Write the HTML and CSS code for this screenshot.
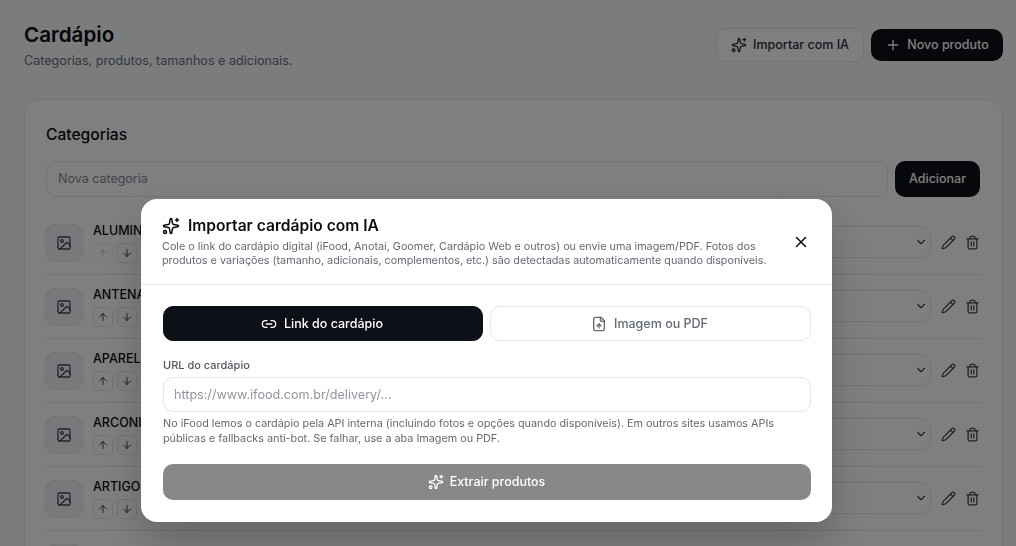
FILE: index.html
```html
<!DOCTYPE html>
<html lang="pt-BR">
<head>
<meta charset="utf-8">
<title>Cardápio</title>
<link rel="stylesheet" href="styles.css">
</head>
<body>
<svg class="defs" width="0" height="0" aria-hidden="true">
  <symbol id="i-sparkles" viewBox="0 0 24 24"><path d="M11.017 2.814a1 1 0 0 1 1.966 0l1.051 5.558a2 2 0 0 0 1.594 1.594l5.558 1.051a1 1 0 0 1 0 1.966l-5.558 1.051a2 2 0 0 0-1.594 1.594l-1.051 5.558a1 1 0 0 1-1.966 0l-1.051-5.558a2 2 0 0 0-1.594-1.594l-5.558-1.051a1 1 0 0 1 0-1.966l5.558-1.051a2 2 0 0 0 1.594-1.594z"/><path d="M20 2v4"/><path d="M22 4h-4"/><circle cx="4" cy="20" r="2"/></symbol>
  <symbol id="i-plus" viewBox="0 0 24 24"><path d="M5 12h14"/><path d="M12 5v14"/></symbol>
  <symbol id="i-image" viewBox="0 0 24 24"><rect x="3" y="3" width="18" height="18" rx="2"/><circle cx="9" cy="9" r="2"/><path d="m21 15-3.086-3.086a2 2 0 0 0-2.828 0L6 21"/></symbol>
  <symbol id="i-up" viewBox="0 0 24 24"><path d="m5 12 7-7 7 7"/><path d="M12 19V5"/></symbol>
  <symbol id="i-down" viewBox="0 0 24 24"><path d="M12 5v14"/><path d="m19 12-7 7-7-7"/></symbol>
  <symbol id="i-pencil" viewBox="0 0 24 24"><path d="M21.174 6.812a1 1 0 0 0-3.986-3.987L3.842 16.174a2 2 0 0 0-.5.83l-1.321 4.352a.5.5 0 0 0 .623.622l4.353-1.32a2 2 0 0 0 .83-.497z"/><path d="m15 5 4 4"/></symbol>
  <symbol id="i-trash" viewBox="0 0 24 24"><path d="M3 6h18"/><path d="M19 6v14c0 1-1 2-2 2H7c-1 0-2-1-2-2V6"/><path d="M8 6V4c0-1 1-2 2-2h4c1 0 2 1 2 2v2"/><path d="M10 11v6"/><path d="M14 11v6"/></symbol>
  <symbol id="i-chevron" viewBox="0 0 24 24"><path d="m6 9 6 6 6-6"/></symbol>
  <symbol id="i-x" viewBox="0 0 24 24"><path d="M18 6 6 18"/><path d="m6 6 12 12"/></symbol>
  <symbol id="i-link" viewBox="0 0 24 24"><path d="M9 17H7A5 5 0 0 1 7 7h2"/><path d="M15 7h2a5 5 0 1 1 0 10h-2"/><path d="M8 12h8"/></symbol>
  <symbol id="i-file-up" viewBox="0 0 24 24"><path d="M15 2H6a2 2 0 0 0-2 2v16a2 2 0 0 0 2 2h12a2 2 0 0 0 2-2V7Z"/><path d="M14 2v4a2 2 0 0 0 2 2h4"/><path d="M12 12v6"/><path d="m15 15-3-3-3 3"/></symbol>
</svg>

<main class="page">
  <header class="page-head">
    <div>
      <h1 class="page-title">Cardápio</h1>
      <p class="page-sub">Categorias, produtos, tamanhos e adicionais.</p>
    </div>
    <div class="page-actions">
      <button class="btn btn-outline"><svg class="ico"><use href="#i-sparkles"/></svg>Importar com IA</button>
      <button class="btn btn-dark"><svg class="ico"><use href="#i-plus"/></svg>Novo produto</button>
    </div>
  </header>

  <section class="card">
    <h2 class="card-title">Categorias</h2>
    <form class="add-row">
      <input class="text-input" placeholder="Nova categoria">
      <button type="button" class="btn btn-dark btn-add">Adicionar</button>
    </form>
    <ul class="cat-list">
      <li class="cat">
        <span class="thumb"><svg class="ico"><use href="#i-image"/></svg></span>
        <div class="cat-main">
          <span class="cat-name">ALUMINIO</span>
          <span class="arrows"><button class="arrow is-off"><svg><use href="#i-up"/></svg></button><button class="arrow"><svg><use href="#i-down"/></svg></button></span>
        </div>
        <span class="select"><svg><use href="#i-chevron"/></svg></span>
        <svg class="act"><use href="#i-pencil"/></svg><svg class="act"><use href="#i-trash"/></svg>
      </li>
      <li class="cat">
        <span class="thumb"><svg class="ico"><use href="#i-image"/></svg></span>
        <div class="cat-main">
          <span class="cat-name">ANTENA</span>
          <span class="arrows"><button class="arrow"><svg><use href="#i-up"/></svg></button><button class="arrow"><svg><use href="#i-down"/></svg></button></span>
        </div>
        <span class="select"><svg><use href="#i-chevron"/></svg></span>
        <svg class="act"><use href="#i-pencil"/></svg><svg class="act"><use href="#i-trash"/></svg>
      </li>
      <li class="cat">
        <span class="thumb"><svg class="ico"><use href="#i-image"/></svg></span>
        <div class="cat-main">
          <span class="cat-name">APAREL</span>
          <span class="arrows"><button class="arrow"><svg><use href="#i-up"/></svg></button><button class="arrow"><svg><use href="#i-down"/></svg></button></span>
        </div>
        <span class="select"><svg><use href="#i-chevron"/></svg></span>
        <svg class="act"><use href="#i-pencil"/></svg><svg class="act"><use href="#i-trash"/></svg>
      </li>
      <li class="cat">
        <span class="thumb"><svg class="ico"><use href="#i-image"/></svg></span>
        <div class="cat-main">
          <span class="cat-name">ARCONI</span>
          <span class="arrows"><button class="arrow"><svg><use href="#i-up"/></svg></button><button class="arrow"><svg><use href="#i-down"/></svg></button></span>
        </div>
        <span class="select"><svg><use href="#i-chevron"/></svg></span>
        <svg class="act"><use href="#i-pencil"/></svg><svg class="act"><use href="#i-trash"/></svg>
      </li>
      <li class="cat">
        <span class="thumb"><svg class="ico"><use href="#i-image"/></svg></span>
        <div class="cat-main">
          <span class="cat-name">ARTIGO</span>
          <span class="arrows"><button class="arrow"><svg><use href="#i-up"/></svg></button><button class="arrow"><svg><use href="#i-down"/></svg></button></span>
        </div>
        <span class="select"><svg><use href="#i-chevron"/></svg></span>
        <svg class="act"><use href="#i-pencil"/></svg><svg class="act"><use href="#i-trash"/></svg>
      </li>
      <li class="cat">
        <span class="thumb"><svg class="ico"><use href="#i-image"/></svg></span>
      </li>
    </ul>
  </section>
</main>

<div class="overlay">
  <div class="modal" role="dialog" aria-modal="true">
    <header class="modal-head">
      <div>
        <h2 class="modal-title"><svg class="ico-title"><use href="#i-sparkles"/></svg>Importar cardápio com IA</h2>
        <p class="modal-desc">Cole o link do cardápio digital (iFood, Anotaí, Goomer, Cardápio Web e outros) ou envie uma imagem/PDF. Fotos dos produtos e variações (tamanho, adicionais, complementos, etc.) são detectadas automaticamente quando disponíveis.</p>
      </div>
      <button class="close" aria-label="Fechar"><svg><use href="#i-x"/></svg></button>
    </header>
    <div class="modal-body">
      <div class="tabs">
        <button class="tab tab-on"><svg class="ico"><use href="#i-link"/></svg>Link do cardápio</button>
        <button class="tab"><svg class="ico"><use href="#i-file-up"/></svg>Imagem ou PDF</button>
      </div>
      <label class="field-label" for="url">URL do cardápio</label>
      <input id="url" class="url-input" placeholder="https://www.ifood.com.br/delivery/...">
      <p class="hint">No iFood lemos o cardápio pela API interna (incluindo fotos e opções quando disponíveis). Em outros sites usamos APIs públicas e fallbacks anti-bot. Se falhar, use a aba Imagem ou PDF.</p>
      <button class="extract"><svg class="ico"><use href="#i-sparkles"/></svg>Extrair produtos</button>
    </div>
  </div>
</div>
</body>
</html>
```

FILE: styles.css
```css
* { box-sizing: border-box; }
html, body { height: 100%; }
body {
  margin: 0;
  height: 546px;
  overflow: hidden;
  background: #f7f8f9;
  color: #0b0d12;
  font-family: Inter, "Liberation Sans", sans-serif;
}
button, input { font-family: inherit; }
svg { fill: none; stroke: currentColor; stroke-width: 2; stroke-linecap: round; stroke-linejoin: round; }
.defs { position: absolute; }
.ico { width: 16px; height: 16px; flex: none; }

.page { height: 546px; overflow: hidden; padding: 24px 13px 0 24px; }
.page-head { display: flex; justify-content: space-between; align-items: flex-start; height: 75px; }
.page-title { margin: 1px 0 0; font-size: 20.6px; line-height: 20px; font-weight: 600; }
.page-sub { margin: 8px 0 0; font-size: 12.6px; line-height: 16px; color: #6a7080; }
.page-actions { display: flex; gap: 7px; align-items: center; margin-top: 4px; }
.btn { display: inline-flex; align-items: center; justify-content: center; padding: 0 0 1px; border-radius: 10px; font-size: 12.5px; font-weight: 450; cursor: pointer; }
.btn-outline { width: 148px; height: 34px; gap: 6px; background: #fff; border: 1px solid #e5e7eb; color: #2a2f3a; }
.btn-dark { width: 132px; height: 32px; gap: 6px; background: #0d1016; border: 0; color: #fff; }

.card { height: 520px; border: 1px solid #e7e8ec; border-radius: 16px; background: #fff; padding: 20px 22px 20px 21px; }
.card-title { margin: 5px 0 0; font-size: 15.6px; line-height: 20px; font-weight: 500; }
.add-row { display: flex; gap: 7px; margin-top: 16px; }
.text-input { flex: 1; height: 36px; border: 1px solid #e5e7eb; border-radius: 10px; background: #fff; padding: 0 11px 2px; font-size: 12.5px; }
.text-input::placeholder { color: #858a96; }
.btn-add { width: 85px; height: 36px; }

.cat-list { list-style: none; margin: 14px 0 0; padding: 0; }
.cat { display: flex; align-items: center; gap: 10px; height: 64px; border-bottom: 1px solid #e7e8ec; padding-top: 1px; color: #3c414c; }
.thumb { width: 38px; height: 38px; display: flex; align-items: center; justify-content: center; flex: none; margin-left: -1px; border-radius: 10px; background: #f1f2f4; border: 1px solid #e7e8ec; color: #454a55; }
.cat-main { flex: 1; display: flex; flex-direction: column; gap: 4px; align-items: flex-start; }
.cat-name { font-size: 12.5px; font-weight: 500; line-height: 16px; color: #0b0d12; }
.arrows { display: flex; gap: 4px; }
.arrow { width: 20px; height: 20px; padding: 0; display: flex; align-items: center; justify-content: center; background: #fff; border: 1px solid #e5e7eb; border-radius: 5px; color: #3c414c; }
.arrow svg { width: 12px; height: 12px; }
.arrow.is-off { color: #c6c8cd; border-color: #f0f1f3; }
.select { width: 160px; height: 32px; display: flex; align-items: center; justify-content: flex-end; padding-right: 2px; border: 1px solid #e5e7eb; border-radius: 10px; background: #fff; color: #3c414c; margin: 0 1px 2px 0; }
.select svg { width: 14px; height: 14px; }
.act { width: 15px; height: 15px; flex: none; margin: 0 0 2px -1px; }

.overlay { position: fixed; inset: 0; display: flex; align-items: flex-start; justify-content: flex-start; padding: 199px 0 0 141px; background: rgba(0, 0, 0, .5); }
.modal { width: 691px; height: 323px; border-radius: 16px; background: #fff; box-shadow: 0 20px 40px rgba(0, 0, 0, .2); }
.modal-head { display: flex; align-items: flex-start; gap: 20px; height: 86px; padding: 17px 22px 0 21px; border-bottom: 1px solid #e7e8ec; }
.modal-title { display: flex; align-items: center; gap: 8px; margin: 0; font-size: 15.6px; line-height: 20px; font-weight: 600; }
.ico-title { width: 18px; height: 18px; flex: none; }
.modal-desc { margin: 4px 0 0; font-size: 10.8px; line-height: 14px; color: #636875; }
.close { flex: none; width: 18px; height: 18px; margin-top: 17px; padding: 0; background: none; border: 0; color: #0b0d12; }
.close svg { width: 18px; height: 18px; display: block; }

.modal-body { padding: 21px 21px 0 22px; }
.tabs { display: grid; grid-template-columns: 320px 321px; gap: 7px; }
.tab { height: 35px; display: flex; align-items: center; justify-content: center; gap: 7px; padding: 0 2px 0 0; border: 1px solid #e5e7eb; border-radius: 10px; background: #fff; color: #636875; font-size: 12.5px; font-weight: 500; }
.tab-on { background: #0d1016; border-color: #0d1016; color: #fff; }
.field-label { display: block; margin-top: 17px; font-size: 11px; line-height: 14px; font-weight: 500; color: #525763; }
.url-input { display: block; width: 100%; height: 35px; margin-top: 5px; padding: 0 10px; border: 1px solid #e5e7eb; border-radius: 10px; background: #fff; font-size: 12.6px; }
.url-input::placeholder { color: #8f949e; }
.hint { margin: 4px 0 0; font-size: 10.8px; line-height: 15px; color: #636875; }
.extract { width: 100%; height: 36px; margin-top: 18px; display: flex; align-items: center; justify-content: center; gap: 6px; padding: 0 1px 1px 0; border: 0; border-radius: 10px; background: #87888a; color: #fff; font-size: 12.5px; font-weight: 500; }
```
